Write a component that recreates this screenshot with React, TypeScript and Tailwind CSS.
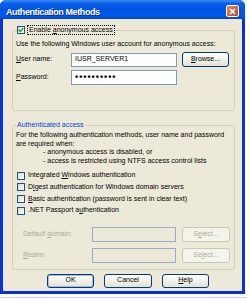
import React from "react";

function Check({ checked }: { checked?: boolean }) {
  return (
    <span className="w-[8px] h-[8px] shrink-0 border border-[#1c5180] bg-gradient-to-br from-[#d8d8d0] to-white flex items-center justify-center">
      {checked && (
        <svg width="6" height="6" viewBox="0 0 6 6">
          <path d="M0.7 2.7 L2.3 4.4 L5.3 1.1" stroke="#21a121" strokeWidth="1.4" fill="none" />
        </svg>
      )}
    </span>
  );
}

function Btn({
  children,
  className,
  disabled,
  def,
}: {
  children: React.ReactNode;
  className: string;
  disabled?: boolean;
  def?: boolean;
}) {
  const look = disabled
    ? "border-[#c9c7ba] text-[#aca899] bg-[#f5f4ea]"
    : "border-[#003c74] text-black bg-gradient-to-b from-white to-[#e4e1d6]";
  const glow = def ? "shadow-[inset_0_0_0_1px_#9ebcf0]" : "";
  return (
    <div className={`flex items-center justify-center rounded-[3px] border ${look} ${glow} ${className}`}>
      {children}
    </div>
  );
}

export default function App() {
  return (
    <div className="w-[247px] h-[300px] bg-white overflow-hidden font-['Liberation_Sans',Arial,sans-serif] text-[7px] text-black">
      <div className="w-[245px] h-[294px] flex flex-col rounded-t-[6px] overflow-hidden bg-[#0831d9]">
        {/* Title bar */}
        <div className="h-[19px] shrink-0 flex items-start bg-[linear-gradient(to_bottom,#3d8ef8_0%,#0c5fe8_18%,#0054e3_50%,#0059ee_85%,#0047c8_100%)]">
          <span className="ml-[6px] mt-[8px] leading-[9px] text-[9px] font-bold tracking-[-0.4px] text-white [text-shadow:1px_1px_0_#0a2a8a]">
            Authentication Methods
          </span>
          <div className="ml-auto mt-[5px] mr-[6px] w-[13px] h-[12px] rounded-[2px] border border-white bg-gradient-to-br from-[#e8876a] to-[#c4401b] flex items-center justify-center">
            <svg width="7" height="7" viewBox="0 0 7 7">
              <path d="M1 1 L6 6 M6 1 L1 6" stroke="white" strokeWidth="1.6" />
            </svg>
          </div>
        </div>
        {/* Body */}
        <div className="flex-1 mx-[3px] mb-[3px] bg-[#ece9d8] flex flex-col">
          <fieldset className="ml-[9px] mt-[6px] w-[223px] border border-[#d0d0bf] rounded-[3px] px-[3px] pt-[4px] pb-[25px]">
            <legend className="ml-[1px] flex items-center">
              <Check checked />
              <span className="ml-[2px] border border-dotted border-black px-[1px] leading-[8px]">
                Enable <u>a</u>nonymous access
              </span>
            </legend>
            <div className="leading-[9px] whitespace-nowrap">
              Use the following Windows user account for anonymous access:
            </div>
            <div className="mt-[4px] flex items-center h-[15px]">
              <span className="w-[55px] shrink-0">
                <u>U</u>ser name:
              </span>
              <div className="w-[106px] h-[14px] border border-[#7f9db9] bg-white flex items-center px-[3px]">
                IUSR_SERVER1
              </div>
              <Btn className="ml-[5px] w-[47px] h-[15px]">
                <span>
                  <u>B</u>rowse...
                </span>
              </Btn>
            </div>
            <div className="mt-[3px] flex items-center h-[15px]">
              <span className="w-[55px] shrink-0">
                <u>P</u>assword:
              </span>
              <div className="w-[106px] h-[15px] border border-[#7f9db9] bg-white flex items-center px-[3px] text-[9px] font-bold tracking-[1px] leading-[9px]">
                ••••••••••
              </div>
            </div>
          </fieldset>

          <fieldset className="ml-[9px] mt-[10px] w-[223px] border border-[#d0d0bf] rounded-[3px] px-[3px] pt-[2px] pb-[6px]">
            <legend className="ml-[0px] px-[1px] text-[#0046d5] leading-[8px]">Authenticated access</legend>
            <div className="leading-[8.67px] whitespace-nowrap">
              <div>For the following authentication methods, user name and password</div>
              <div>are required when:</div>
              <div className="pl-[27px]">- anonymous access is disabled, or</div>
              <div className="pl-[27px]">- access is restricted using NTFS access control lists</div>
            </div>
            <div className="mt-[6px] flex flex-col gap-[3.67px]">
              <div className="h-[8px] flex items-center gap-[3px] ml-[1px]">
                <Check />
                <span>
                  Integrated <u>W</u>indows authentication
                </span>
              </div>
              <div className="h-[8px] flex items-center gap-[3px] ml-[1px]">
                <Check />
                <span>
                  D<u>i</u>gest authentication for Windows domain servers
                </span>
              </div>
              <div className="h-[8px] flex items-center gap-[3px] ml-[1px]">
                <Check />
                <span>
                  <u>B</u>asic authentication (password is sent in clear text)
                </span>
              </div>
              <div className="h-[8px] flex items-center gap-[3px] ml-[1px]">
                <Check />
                <span>
                  .NET Passport a<u>u</u>thentication
                </span>
              </div>
            </div>
            <div className="mt-[12px] flex flex-col gap-[6px] text-[#aca899]">
              <div className="h-[15px] flex items-center">
                <span className="w-[76px] pl-[7px] shrink-0">
                  Default <u>d</u>omain:
                </span>
                <div className="w-[84px] h-[15px] border border-[#98acc4] bg-[#ece9d8]" />
                <Btn disabled className="ml-[6px] w-[48px] h-[15px]">
                  <span>
                    S<u>e</u>lect...
                  </span>
                </Btn>
              </div>
              <div className="h-[15px] flex items-center">
                <span className="w-[76px] pl-[7px] shrink-0">
                  <u>R</u>ealm:
                </span>
                <div className="w-[84px] h-[15px] border border-[#98acc4] bg-[#ece9d8]" />
                <Btn disabled className="ml-[6px] w-[48px] h-[15px]">
                  <span>
                    Se<u>l</u>ect...
                  </span>
                </Btn>
              </div>
            </div>
          </fieldset>

          <div className="mt-[4px] ml-[44px] flex gap-[10px]">
            <Btn def className="w-[47px] h-[14px]">
              OK
            </Btn>
            <Btn className="w-[48px] h-[14px]">Cancel</Btn>
            <Btn className="w-[47px] h-[14px]">
              <span>
                <u>H</u>elp
              </span>
            </Btn>
          </div>
        </div>
      </div>
      <div className="mt-[3px] h-[1px] w-[247px] bg-[#c4d2ec]" />
    </div>
  );
}
